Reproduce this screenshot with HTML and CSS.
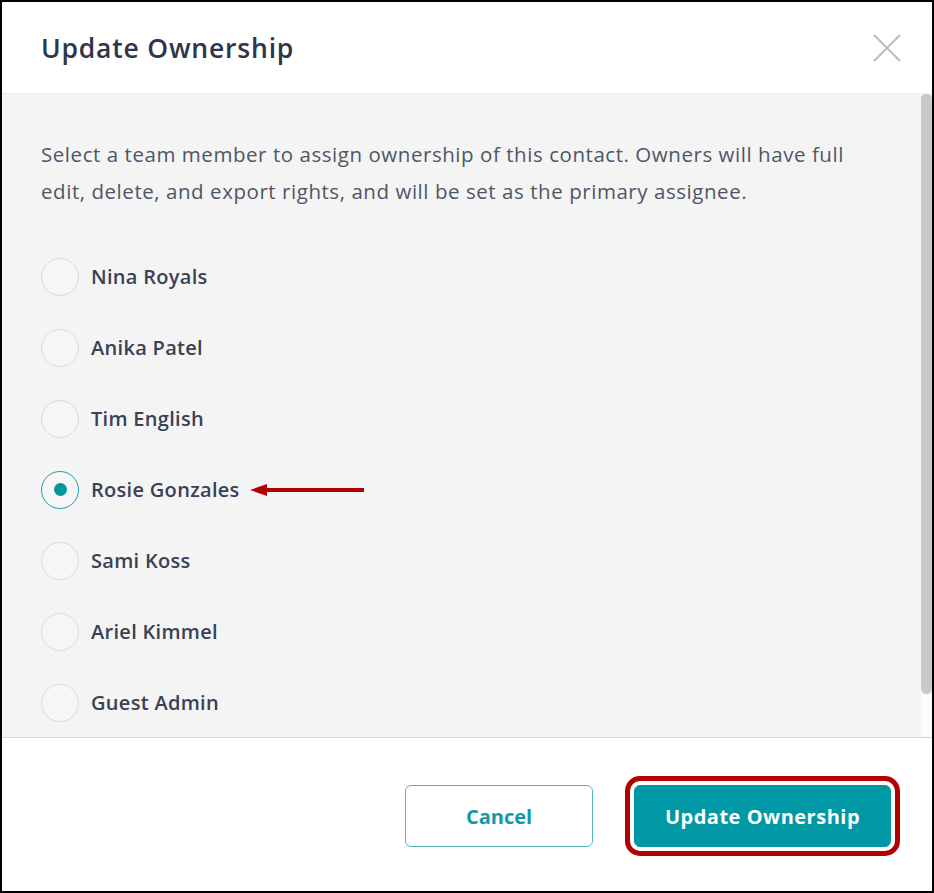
FILE: index.html
```html
<!DOCTYPE html>
<html lang="en">
<head>
    <meta charset="UTF-8">
    <meta name="viewport" content="width=device-width, initial-scale=1.0">
    <title>Update Ownership</title>
    <link rel="stylesheet" href="styles.css">
</head>
<body>
    <div class="modal">
        <header class="modal-header">
            <h1>Update Ownership</h1>
            <button class="close-btn" aria-label="Close">
                <svg width="30" height="30" viewBox="0 0 30 30">
                    <path d="M2 2 L28 28 M28 2 L2 28" stroke="#b9bdc3" stroke-width="2" fill="none"/>
                </svg>
            </button>
        </header>

        <section class="modal-body">
            <div class="body-content">
                <p class="intro">Select a team member to assign ownership of this contact. Owners will have full edit, delete, and export rights, and will be set as the primary assignee.</p>

                <ul class="owner-list">
                    <li class="owner"><span class="radio"></span><span class="name">Nina Royals</span></li>
                    <li class="owner"><span class="radio"></span><span class="name">Anika Patel</span></li>
                    <li class="owner"><span class="radio"></span><span class="name">Tim English</span></li>
                    <li class="owner selected">
                        <span class="radio"></span><span class="name">Rosie Gonzales</span>
                        <!-- seta de destaque -->
                        <svg class="arrow" width="114" height="14" viewBox="0 0 114 14">
                            <path d="M0 7 L17 1 L17 13 Z" fill="#b30000"/>
                            <rect x="14" y="5" width="100" height="4" fill="#b30000"/>
                        </svg>
                    </li>
                    <li class="owner"><span class="radio"></span><span class="name">Sami Koss</span></li>
                    <li class="owner"><span class="radio"></span><span class="name">Ariel Kimmel</span></li>
                    <li class="owner"><span class="radio"></span><span class="name">Guest Admin</span></li>
                </ul>
            </div>
            <div class="scrollbar"><div class="thumb"></div></div>
        </section>

        <footer class="modal-footer">
            <button class="btn btn-outline">Cancel</button>
            <button class="btn btn-primary highlighted">Update Ownership</button>
        </footer>
    </div>
</body>
</html>
```

FILE: styles.css
```css
/* Base */
* {
    box-sizing: border-box;
}

body {
    margin: 0;
    font-family: 'Open Sans', 'Noto Sans', sans-serif;
    background: #fff;
}

.modal {
    width: 934px;
    height: 893px;
    border: 2px solid #000;
    display: flex;
    flex-direction: column;
    background: #fff;
    overflow: hidden;
}

/* Header */
.modal-header {
    height: 91px;
    flex-shrink: 0;
    display: flex;
    align-items: center;
    justify-content: space-between;
    padding: 0 30px 0 39px;
}

.modal-header h1 {
    margin: 0;
    font-size: 26.5px;
    font-weight: 600;
    color: #2f3649;
    letter-spacing: 0.8px;
}

.close-btn {
    background: none;
    border: none;
    padding: 0;
    width: 30px;
    height: 30px;
    cursor: pointer;
}

/* Body */
.modal-body {
    flex: 1;
    min-height: 0;
    display: flex;
    background: #f4f4f4;
    border-top: 1px solid #eeeeee;
}

.body-content {
    flex: 1;
    overflow: hidden;
    padding: 42px 0 0 39px;
}

.intro {
    margin: 0;
    font-size: 20.5px;
    line-height: 37px;
    letter-spacing: 0.55px;
    color: #4f5666;
    max-width: 830px;
}

.owner-list {
    list-style: none;
    margin: 31px 0 0;
    padding: 0;
}

.owner {
    height: 71px;
    display: flex;
    align-items: center;
}

.radio {
    width: 38px;
    height: 38px;
    border-radius: 50%;
    border: 1px solid #d7dbe1;
    background: #f6f6f6;
    margin-right: 12px;
    display: flex;
    align-items: center;
    justify-content: center;
}

.owner.selected .radio {
    border-color: #1aa0ac;
}

.owner.selected .radio::after {
    content: "";
    width: 13px;
    height: 13px;
    border-radius: 50%;
    background: #00979f;
}

.name {
    font-size: 20px;
    font-weight: 600;
    letter-spacing: 0.3px;
    color: #3a4155;
}

.arrow {
    margin-left: 10px;
}

/* Scrollbar */
.scrollbar {
    width: 11px;
    background: #fbfbfb;
}

.thumb {
    height: 600px;
    background: #c9c9c9;
    border-radius: 5px 5px 6px 6px;
}

/* Footer */
.modal-footer {
    height: 154px;
    flex-shrink: 0;
    border-top: 1px solid #d3d8df;
    display: flex;
    align-items: center;
    justify-content: flex-end;
    gap: 41px;
    padding: 3px 41px 0 0;
}

.btn {
    height: 62px;
    border-radius: 6px;
    font-family: inherit;
    font-size: 20px;
    font-weight: 700;
    cursor: pointer;
}

.btn-outline {
    width: 188px;
    background: #fff;
    color: #0f9aa6;
    border: 1px solid #54b8c0;
}

.btn-primary {
    width: 257px;
    background: #0098a5;
    color: #fff;
    border: 1px solid #0098a5;
    letter-spacing: 0.5px;
}

/* Destaque vermelho */
.highlighted {
    outline: 5px solid #b30000;
    outline-offset: 4px;
}
```
